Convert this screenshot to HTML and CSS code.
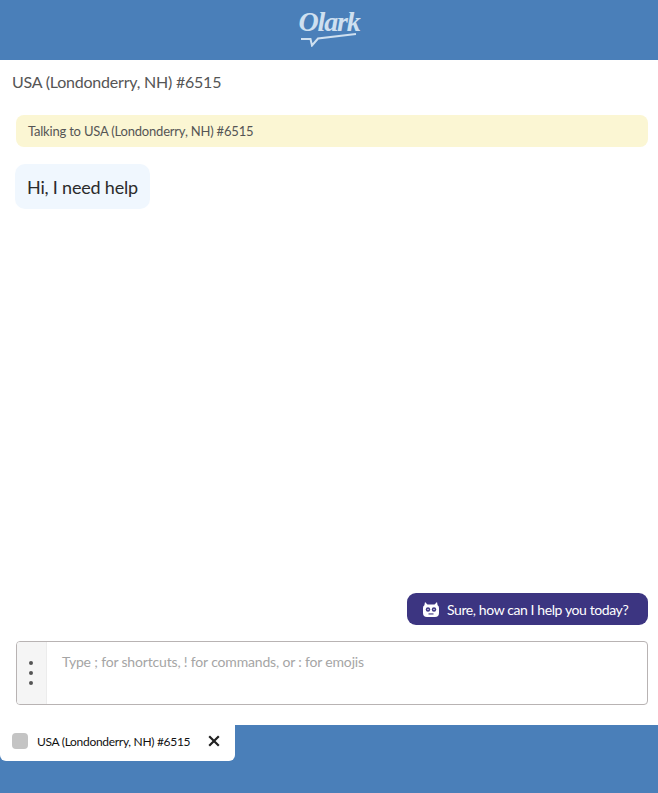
FILE: index.html
```html
<!DOCTYPE html>
<html lang="en">
<head>
<meta charset="utf-8">
<title>Olark</title>
<link rel="stylesheet" href="styles.css">
</head>
<body>
<div class="app">
  <header class="topbar">
    <div class="logo">
      <span class="logo-word">Olark</span>
      <svg class="logo-tail" width="58" height="16" viewBox="0 0 58 16" aria-hidden="true"><path d="M1 8 L10.5 8 L12 14.5 L18 7.5 L56 3" fill="none" stroke="#cfe0f0" stroke-width="2"/></svg>
    </div>
  </header>
  <div class="chat-title">USA (Londonderry, NH) #6515</div>
  <main class="messages">
    <div class="notice">Talking to USA (Londonderry, NH) #6515</div>
    <div class="bubble">Hi, I need help</div>
  </main>
  <div class="suggest-row">
    <button class="suggest">
      <svg class="bot" width="16" height="15" viewBox="0 0 16 15" aria-hidden="true">
        <path d="M2 0 L4.5 2.5 H11.5 L14 0 L14.6 3.2 Q16 4 16 6 V11 Q16 15 12 15 H4 Q0 15 0 11 V6 Q0 4 1.4 3.2 Z" fill="#fff"/>
        <circle cx="5" cy="7.5" r="2.2" fill="#3c3581"/>
        <circle cx="11" cy="7.5" r="2.2" fill="#3c3581"/>
        <circle cx="5" cy="7.5" r=".8" fill="#cfcde4"/>
        <circle cx="11" cy="7.5" r=".8" fill="#cfcde4"/>
        <rect x="5.5" y="11.4" width="5" height="1.1" fill="#3c3581"/>
      </svg>
      <span class="suggest-text">Sure, how can I help you today?</span>
    </button>
  </div>
  <div class="composer">
    <div class="menu"><i></i><i></i><i></i></div>
    <div class="placeholder">Type ; for shortcuts, ! for commands, or : for emojis</div>
  </div>
  <footer class="tabbar">
    <div class="tab">
      <span class="avatar"></span>
      <span class="tab-name">USA (Londonderry, NH) #6515</span>
      <svg class="close" width="12" height="12" viewBox="0 0 12 12" aria-hidden="true"><path d="M1.2 1.2 L10.8 10.8 M10.8 1.2 L1.2 10.8" stroke="#222" stroke-width="2.2" fill="none"/></svg>
    </div>
  </footer>
</div>
</body>
</html>
```
FILE: styles.css
```css
* { box-sizing: border-box; }
html, body { margin: 0; height: 100%; }
body { font-family: "Lato", "Liberation Sans", sans-serif; background: #fff; overflow: hidden; }
.app { display: flex; flex-direction: column; height: 793px; }
.topbar { height: 60px; flex: none; background: #4a7fb9; display: flex; justify-content: center; }
.logo { width: 58px; display: flex; flex-direction: column; align-items: center; padding-top: 9px; }
.logo-word { height: 22px; font-family: "Liberation Serif", serif; font-style: italic; font-weight: 700; font-size: 28px; line-height: 26px; letter-spacing: -1.2px; color: #cfe0f0; }
.logo-tail { margin-top: 0; }
.chat-title { flex: none; height: 45px; padding: 12px 12px 0; font-size: 16px; letter-spacing: -.22px; line-height: 20px; color: #555; }
.messages { flex: 1; padding: 10px 10px 0 15px; display: flex; flex-direction: column; align-items: flex-start; }
.notice { align-self: stretch; margin-left: 1px; height: 32px; padding: 0 12px; display: flex; align-items: center; border-radius: 8px; background: #fbf6d3; color: #555; font-size: 13px; letter-spacing: -.2px; }
.bubble { margin-top: 17px; height: 45px; padding: 0 12px; display: flex; align-items: center; border-radius: 10px; background: #f0f7fe; color: #2b2b2b; font-size: 18px; letter-spacing: -.2px; }
.suggest-row { flex: none; display: flex; justify-content: flex-end; padding-right: 10px; }
.suggest { height: 32px; width: 241px; padding: 0 0 0 16px; display: flex; align-items: center; gap: 8px; border: 0; border-radius: 9px; background: #3c3581; color: #fff; font: 14px "Lato", sans-serif; }
.suggest-text { letter-spacing: -.4px; }
.bot { flex: none; }
.composer { flex: none; height: 64px; margin: 16px 10px 20px 16px; display: flex; border: 1px solid #b8b3b3; border-radius: 4px; overflow: hidden; }
.menu { width: 30px; flex: none; padding: 19px 1px 0 0; background: #f5f5f5; border-right: 1px solid #ececec; display: flex; flex-direction: column; align-items: center; gap: 6px; }
.menu i { width: 4px; height: 4px; border-radius: 50%; background: #555; }
.placeholder { padding: 11px 15px; font-size: 14px; letter-spacing: -.17px; line-height: 17px; color: #a5a5a5; }
.tabbar { flex: none; height: 68px; background: #4a7fb9; }
.tab { width: 235px; height: 36px; padding: 0 0 4px 12px; display: flex; align-items: center; background: #fff; border-radius: 0 0 6px 6px; }
.avatar { width: 16px; height: 16px; flex: none; border-radius: 4px; background: #c4c4c4; }
.tab-name { margin-left: 9px; font-size: 12px; letter-spacing: -.3px; color: #111; white-space: nowrap; }
.close { margin-left: auto; margin-right: 15px; flex: none; }
```
